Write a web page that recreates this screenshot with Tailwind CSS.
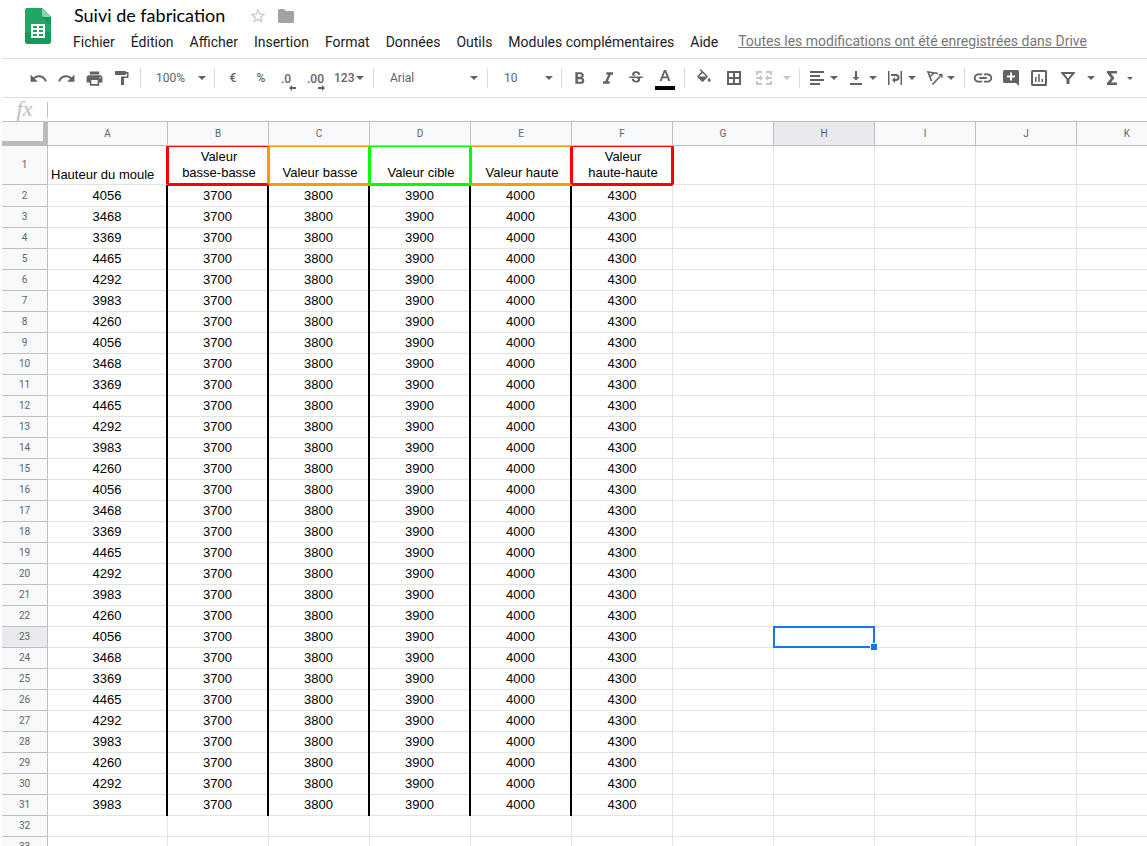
<!DOCTYPE html>
<html lang="fr">
<head>
<meta charset="utf-8">
<title>Suivi de fabrication</title>
<script src="https://cdn.jsdelivr.net/npm/@tailwindcss/browser@4"></script>
</head>
<body class="flex h-screen flex-col overflow-hidden bg-white pl-0.5 font-['Roboto',sans-serif] text-black">

<header class="flex h-[58px] shrink-0 pl-5">
  <a href="#" aria-label="Accueil Sheets" class="mt-2 ml-[3px] block h-9 w-[26px] shrink-0">
    <svg viewBox="0 0 26 36" class="h-9 w-[26px]"><path d="M2.500 0H17l9 9v24.500a2.500 2.500 0 0 1-2.500 2.500h-21A2.500 2.500 0 0 1 0 33.500v-31A2.500 2.500 0 0 1 2.500 0z" fill="#159b58"/><path d="M2.500 0H17l9 9v15H0V2.500A2.500 2.500 0 0 1 2.500 0z" fill="#23a566"/><path d="M17 9h9v9z" fill="#128a4c" opacity=".5"/><path d="M17 0l9 9h-7a2 2 0 0 1-2-2z" fill="#8ed1b1"/><path d="M6 16h14v14H6z" fill="#fff"/><path d="M8 18h4v2H8zM14 18h4v2h-4zM8 22h4v2H8zM14 22h4v2h-4zM8 26h4v2H8zM14 26h4v2h-4z" fill="#1ca05e"/></svg>
  </a>
  <div class="ml-[22px] min-w-0 flex-1">
    <div class="flex h-8 items-center">
      <h1 class="w-44 pb-0.5 pl-px text-lg whitespace-nowrap font-['Lato',sans-serif]">Suivi de fabrication</h1>
      <button aria-label="Suivre" class="flex w-[18px] justify-center"><svg viewBox="0 0 24 24" class="size-[18px] shrink-0" fill="#c4c7cb"><path d="M22 9.240l-7.190-.62L12 2 9.190 8.630 2 9.240l5.460 4.730L5.820 21 12 17.270 18.180 21l-1.630-7.030L22 9.240zM12 15.400l-3.760 2.270 1-4.280-3.320-2.880 4.380-.38L12 6.100l1.710 4.040 4.380.38-3.320 2.880 1 4.280L12 15.400z"/></svg></button>
      <button aria-label="Déplacer" class="ml-2.5 flex w-[18px] justify-center"><svg viewBox="0 0 18 14" class="h-[14px] w-[18px]" fill="#9fa2a7"><path d="M1 1.500Q1 0 2.500 0H7l2 2h6.500Q17 2 17 3.500v9q0 1.500-1.500 1.500h-13Q1 14 1 12.500z"/></svg></button>
    </div>
    <nav class="flex h-5 items-center gap-4 text-sm whitespace-nowrap text-[#202124]">
      <button>Fichier</button><button>Édition</button><button>Afficher</button><button>Insertion</button><button>Format</button><button>Données</button><button>Outils</button><button>Modules complémentaires</button><button>Aide</button>
      <a href="#" class="ml-1 pb-0.5 text-[#777] underline">Toutes les modifications ont été enregistrées dans Drive</a>
    </nav>
  </div>
</header>

<div role="toolbar" aria-label="Mise en forme" class="flex h-10 shrink-0 items-center border-y border-[#dadce0] pl-[22px] text-xs text-[#5f6368]">
  <button aria-label="Annuler" class="flex w-7 shrink-0 justify-center"><svg viewBox="0 0 24 24" class="size-[19px]" fill="currentColor"><path d="M12.500 8c-2.650 0-5.050.99-6.900 2.600L2 7v9h9l-3.620-3.620c1.390-1.160 3.160-1.880 5.120-1.880 3.540 0 6.550 2.310 7.600 5.500l2.370-.78C21.080 11.030 17.150 8 12.500 8z"/></svg></button>
  <button aria-label="Rétablir" class="flex w-7 shrink-0 justify-center"><svg viewBox="0 0 24 24" class="size-[19px]" fill="currentColor"><path d="M18.400 10.600C16.550 8.990 14.150 8 11.500 8c-4.650 0-8.580 3.030-9.960 7.220L3.900 16c1.050-3.190 4.050-5.500 7.600-5.500 1.950 0 3.730.72 5.120 1.880L13 16h9V7l-3.600 3.600z"/></svg></button>
  <button aria-label="Imprimer" class="flex w-7 shrink-0 justify-center"><svg viewBox="0 0 24 24" class="size-[19px]" fill="currentColor"><path d="M19 8H5c-1.660 0-3 1.340-3 3v6h4v4h12v-4h4v-6c0-1.660-1.340-3-3-3zm-3 11H8v-5h8v5zm3-7c-.55 0-1-.45-1-1s.45-1 1-1 1 .45 1 1-.45 1-1 1zm-1-9H6v4h12V3z"/></svg></button>
  <button aria-label="Copier la mise en forme" class="flex w-7 shrink-0 justify-center"><svg viewBox="0 0 18 18" class="size-[18px]" fill="currentColor"><path d="M2.500 2h10q.5 0 .5.500V3h2.500v6H11v7H8V7.500h6v-3h-1v1q0 .5-.5.500h-10Q2 6 2 5.500v-3Q2 2 2.500 2z"/></svg></button>
  <span class="mx-1 h-5 w-px shrink-0 bg-[#dadce0]"></span>
  <label class="flex w-[65px] shrink-0 items-center pl-[11px]"><select aria-label="Zoom" class="w-10 appearance-none"><option>100%</option></select><svg viewBox="0 0 8 4" class="ml-0.5 h-1 w-2" fill="currentColor"><path d="M0 0h8L4 4z"/></svg></label>
  <span class="mx-1 h-5 w-px shrink-0 bg-[#dadce0]"></span>
  <button aria-label="Format monétaire" class="w-7 shrink-0 font-medium">€</button>
  <button aria-label="Format pourcentage" class="w-7 shrink-0 font-medium">%</button>
  <button aria-label="Réduire les décimales" class="flex w-7 shrink-0 flex-col items-start pt-2 pl-1.5 leading-3 font-medium">.0<svg viewBox="0 0 22 6" class="h-1.5 w-[22px]" fill="currentColor"><path d="M8 3l3-3v2h4v2h-4v2z"/></svg></button>
  <button aria-label="Ajouter des décimales" class="flex w-7 shrink-0 flex-col items-start pt-2 pl-1 leading-3 font-medium">.00<svg viewBox="0 0 22 6" class="h-1.5 w-[22px]" fill="currentColor"><path d="M18 3l-3-3v2h-4v2h4v2z"/></svg></button>
  <button aria-label="Autres formats" class="flex w-[38px] shrink-0 items-center pl-[3px] font-medium">123<svg viewBox="0 0 8 4" class="ml-0.5 h-1 w-2" fill="currentColor"><path d="M0 0h8L4 4z"/></svg></button>
  <span class="mx-1 h-5 w-px shrink-0 bg-[#dadce0]"></span>
  <label class="flex w-[105px] shrink-0 items-center pl-3"><select aria-label="Police" class="w-20 appearance-none"><option>Arial</option></select><svg viewBox="0 0 8 4" class="h-1 w-2" fill="currentColor"><path d="M0 0h8L4 4z"/></svg></label>
  <span class="mx-1 h-5 w-px shrink-0 bg-[#dadce0]"></span>
  <label class="flex w-[65px] shrink-0 items-center pl-3"><select aria-label="Taille de police" class="w-[41px] appearance-none"><option>10</option></select><svg viewBox="0 0 8 4" class="h-1 w-2" fill="currentColor"><path d="M0 0h8L4 4z"/></svg></label>
  <span class="mx-1 h-5 w-px shrink-0 bg-[#dadce0]"></span>
  <button aria-label="Gras" class="flex w-7 shrink-0 justify-center"><svg viewBox="0 0 24 24" class="size-5" fill="currentColor"><path d="M15.600 10.790c.97-.67 1.650-1.770 1.650-2.790 0-2.260-1.750-4-4-4H7v14h7.040c2.090 0 3.710-1.700 3.710-3.790 0-1.520-.86-2.820-2.150-3.420zM10 6.500h3c.83 0 1.500.67 1.500 1.500s-.67 1.500-1.500 1.500h-3v-3zm3.500 9H10v-3h3.500c.83 0 1.500.67 1.500 1.500s-.67 1.500-1.500 1.500z" transform="translate(-.6 1)"/></svg></button>
  <button aria-label="Italique" class="flex w-7 shrink-0 justify-center"><svg viewBox="0 0 24 24" class="size-5" fill="currentColor"><path d="M10 5v3h2.210l-3.420 8H6v3h8v-3h-2.210l3.420-8H18V5z"/></svg></button>
  <button aria-label="Barré" class="flex w-7 shrink-0 justify-center"><svg viewBox="0 0 24 24" class="size-[18px]" fill="currentColor"><path d="M7.240 8.750c-.26-.48-.39-1.030-.39-1.670 0-.61.130-1.160.4-1.670.26-.5.63-.93 1.110-1.290.48-.35 1.050-.63 1.700-.83.66-.19 1.390-.29 2.180-.29.81 0 1.540.110 2.210.34.66.220 1.230.54 1.690.94.47.4.83.88 1.080 1.430s.38 1.150.38 1.810h-3.010c0-.31-.05-.59-.15-.85-.09-.27-.24-.49-.44-.68-.2-.19-.45-.33-.75-.44-.3-.1-.66-.16-1.060-.16-.39 0-.74.040-1.030.130s-.53.210-.72.360c-.19.160-.34.340-.44.550-.1.210-.15.430-.15.660 0 .48.250.88.740 1.210.38.250.77.480 1.410.7H7.390c-.05-.08-.11-.17-.15-.25zM21 12v-2H3v2h9.620c.18.070.4.140.55.200.37.170.66.340.87.510s.35.360.43.570c.07.200.110.430.110.69 0 .23-.05.450-.14.660-.09.200-.23.380-.42.530-.19.150-.42.260-.71.350-.29.080-.63.130-1.010.130-.43 0-.83-.04-1.180-.13s-.66-.23-.91-.42c-.25-.19-.45-.44-.59-.75s-.25-.76-.25-1.210H6.400c0 .55.080 1.130.240 1.580s.37.850.65 1.210c.28.350.6.660.98.920.37.260.78.480 1.220.65.440.17.900.300 1.380.39.480.080.960.130 1.440.130.800 0 1.530-.09 2.180-.28s1.210-.45 1.670-.79c.46-.34.820-.77 1.070-1.270s.38-1.070.38-1.710c0-.6-.1-1.140-.31-1.610-.05-.11-.11-.23-.17-.33H21z"/></svg></button>
  <button aria-label="Couleur du texte" class="flex w-[30px] shrink-0 justify-center"><svg viewBox="0 0 22 24" class="h-6 w-[22px]"><path d="M9.900 4h2.200l4.300 11h-2.100l-1-2.700H8.700l-1 2.700H5.600zM11 6.200L9.300 10.600h3.400z" fill="#5f6368"/><path d="M1 20h20v4H1z" fill="#000"/></svg></button>
  <span class="mx-1 h-5 w-px shrink-0 bg-[#dadce0]"></span>
  <button aria-label="Couleur de remplissage" class="flex w-[30px] shrink-0 justify-center"><svg viewBox="0 0 24 24" class="size-[18px]" fill="currentColor"><path d="M16.560 8.940L7.620 0 6.210 1.410l2.380 2.380-5.150 5.150c-.59.59-.59 1.540 0 2.120l5.500 5.500c.29.290.68.440 1.060.440s.77-.15 1.060-.44l5.500-5.500c.59-.58.59-1.530 0-2.120zM5.210 10L10 5.210 14.790 10H5.210zM19 11.500s-2 2.170-2 3.500c0 1.100.9 2 2 2s2-.9 2-2c0-1.330-2-3.500-2-3.500z"/></svg></button>
  <button aria-label="Bordures" class="flex w-[30px] shrink-0 justify-center"><svg viewBox="0 0 14 14" class="size-[14px]" fill="none" stroke="currentColor" stroke-width="2"><path d="M1 1h12v12H1zM7 1v12M1 7h12"/></svg></button>
  <button aria-label="Fusionner" class="flex w-[30px] shrink-0 justify-center text-[#c4c6c8]"><svg viewBox="0 0 16 14" class="h-[14px] w-4" fill="currentColor"><path d="M0 0h6v2H2v2H0zM10 0h6v4h-2V2h-4zM0 10h2v2h4v2H0zM14 10h2v4h-6v-2h4zM0 6h4V4l3 3-3 3V8H0zM16 6h-4V4L9 7l3 3V8h4z"/></svg></button>
  <button aria-label="Types de fusion" class="flex w-4 shrink-0 justify-center text-[#c4c6c8]"><svg viewBox="0 0 8 4" class="h-1 w-2" fill="currentColor"><path d="M0 0h8L4 4z"/></svg></button>
  <span class="mx-1 h-5 w-px shrink-0 bg-[#dadce0]"></span>
  <button aria-label="Alignement horizontal" class="flex w-[39px] shrink-0 items-center gap-1.5 pl-1.5"><svg viewBox="0 0 14 14" class="h-[14px] w-[14px]" fill="currentColor"><path d="M0 0h14v2H0zM0 4h10v2H0zM0 8h14v2H0zM0 12h10v2H0z"/></svg><svg viewBox="0 0 8 4" class="h-1 w-2" fill="currentColor"><path d="M0 0h8L4 4z"/></svg></button>
  <button aria-label="Alignement vertical" class="flex w-[39px] shrink-0 items-center gap-1.5 pl-1.5"><svg viewBox="0 0 14 14" class="h-[14px] w-[14px]" fill="currentColor"><path d="M1 12h12v2H1zM6 0h2v6h2.500L7 9.500 3.500 6H6z"/></svg><svg viewBox="0 0 8 4" class="h-1 w-2" fill="currentColor"><path d="M0 0h8L4 4z"/></svg></button>
  <button aria-label="Retour à la ligne" class="flex w-[39px] shrink-0 items-center gap-1.5 pl-1.5"><svg viewBox="0 0 14 14" class="h-[14px] w-[14px]" fill="currentColor"><path d="M0 0h1.500v14H0zM12.500 0H14v14h-1.500zM3 3h5a3.500 3.500 0 0 1 0 7H7v2L4 9l3-3v2h1a1.500 1.500 0 0 0 0-3H3z"/></svg><svg viewBox="0 0 8 4" class="h-1 w-2" fill="currentColor"><path d="M0 0h8L4 4z"/></svg></button>
  <button aria-label="Rotation du texte" class="flex w-[39px] shrink-0 items-center gap-1 pl-1.5"><svg viewBox="0 0 16 14" class="h-[14px] w-4" fill="none" stroke="currentColor" stroke-width="1.600"><path d="M11 2.500L1 1l3.500 9M4.500 10l-.2-.6M7 2l-4.500 4M5.500 13.500L13 5.500"/><path d="M15.500 3v4.500L11 3z" fill="currentColor" stroke="none"/></svg><svg viewBox="0 0 8 4" class="h-1 w-2" fill="currentColor"><path d="M0 0h8L4 4z"/></svg></button>
  <span class="mx-1 h-5 w-px shrink-0 bg-[#dadce0]"></span>
  <button aria-label="Insérer un lien" class="flex w-7 shrink-0 justify-center"><svg viewBox="0 0 24 24" class="size-[22px]" fill="currentColor"><path d="M3.900 12c0-1.710 1.390-3.100 3.100-3.100h4V7H7c-2.760 0-5 2.240-5 5s2.240 5 5 5h4v-1.900H7c-1.710 0-3.100-1.390-3.100-3.100zM8 13h8v-2H8v2zm9-6h-4v1.900h4c1.710 0 3.100 1.390 3.100 3.100s-1.390 3.100-3.100 3.100h-4V17h4c2.760 0 5-2.240 5-5s-2.240-5-5-5z"/></svg></button>
  <button aria-label="Insérer un commentaire" class="flex w-7 shrink-0 justify-center"><svg viewBox="0 0 16 16" class="size-4" fill="currentColor"><path fill-rule="evenodd" d="M1.500 0h13Q16 0 16 1.500V16l-3-3H1.500Q0 13 0 11.500v-10Q0 0 1.500 0zM7 2.500v3H4v2h3v3h2v-3h3v-2H9v-3z"/></svg></button>
  <button aria-label="Insérer un graphique" class="flex w-7 shrink-0 justify-center"><svg viewBox="0 0 16 16" class="size-4" fill="currentColor"><path fill-rule="evenodd" d="M1.500 0h13Q16 0 16 1.500v13q0 1.500-1.500 1.500h-13Q0 16 0 14.500v-13Q0 0 1.500 0zM2 2v12h12V2zM4 7h1.500v5H4zM7.200 4h1.600v8H7.200zM10.500 9H12v3h-1.500z"/></svg></button>
  <button aria-label="Créer un filtre" class="flex w-[30px] shrink-0 justify-center"><svg viewBox="0 0 14 12" class="h-3 w-[14px]" fill="currentColor"><path fill-rule="evenodd" d="M0 0h14v1L8.500 7.500V12h-3V7.500L0 1zM3.500 2L7 6.500 10.500 2z"/></svg></button>
  <button aria-label="Vues filtrées" class="flex w-[15px] shrink-0 justify-center"><svg viewBox="0 0 8 4" class="h-1 w-2" fill="currentColor"><path d="M0 0h8L4 4z"/></svg></button>
  <button aria-label="Fonctions" class="flex w-7 shrink-0 justify-center"><svg viewBox="0 0 12 14" class="h-[14px] w-3" fill="currentColor"><path d="M1 0h10v2.500H5L8.500 7 5 11.500h6V14H1v-2l4-5-4-5z"/></svg></button>
  <button aria-label="Liste des fonctions" class="flex w-2 shrink-0 justify-center"><svg viewBox="0 0 6 3" class="h-[3px] w-1.5" fill="currentColor"><path d="M0 0h6L3 3z"/></svg></button>
</div>

<div class="flex h-[23px] shrink-0 items-center">
  <label for="formula" class="w-[45px] pb-0.5 text-center font-['Liberation_Serif',serif] text-[22px] leading-5 text-[#bdbdbd] italic">fx</label>
  <input id="formula" type="text" class="h-4 min-w-0 flex-1 border-l border-[#c0c0c0] pl-2 text-sm outline-none">
</div>

<main class="min-h-0 flex-1 overflow-hidden border-t border-[#c0c0c0]">
  <table class="w-[1175px] table-fixed border-separate border-spacing-0 text-center font-['Liberation_Sans',sans-serif] text-[13px]">
    <colgroup><col class="w-[46px]"><col class="w-[120px]"><col span="10" class="w-[101px]"></colgroup>
    <thead class="font-['Roboto',sans-serif] text-[10px] text-[#5f6368]">
      <tr id="letters" class="h-6"><td class="border-r-[5px] border-b-[5px] border-[#bbb] bg-[#f8f9fa] p-0"></td></tr>
    </thead>
    <tbody id="rows">
      <tr class="h-[39px] align-bottom leading-4">
        <th scope="row" class="border-r border-b border-[#c0c0c0] bg-[#f8f9fa] p-0 align-middle font-['Roboto',sans-serif] text-[10px] font-normal text-[#5f6368]">1</th>
        <td class="border-r-2 border-b border-r-[#f00] border-b-[#e2e3e3] pt-0 pr-0 pb-px pl-[3px] text-left whitespace-nowrap">Hauteur du moule</td>
        <td class="border-t border-r-2 border-b-2 border-l border-[#f00] border-r-[#f90] pt-0 pr-0 pb-0.5 pl-0.5">Valeur<br>basse-basse</td>
        <td class="border-t border-r-2 border-b-2 border-l border-[#f90] border-r-[#0f0] pt-0 pr-0 pb-0.5 pl-0.5">Valeur basse</td>
        <td class="border-t border-r-2 border-b-2 border-l border-[#0f0] pt-0 pr-0 pb-0.5 pl-0.5">Valeur cible</td>
        <td class="border-t border-r-2 border-b-2 border-l border-[#f90] border-r-[#f00] border-l-[#0f0] pt-0 pr-0 pb-0.5 pl-0.5">Valeur haute</td>
        <td class="border-t border-r-2 border-b-2 border-l border-[#f00] pt-0 pr-0 pb-0.5 pl-0.5">Valeur<br>haute-haute</td>
        <td class="border-r border-b border-l border-[#e2e3e3] border-l-[#f00] p-0"></td>
        <td class="border-r border-b border-[#e2e3e3] p-0"></td>
        <td class="border-r border-b border-[#e2e3e3] p-0"></td>
        <td class="border-r border-b border-[#e2e3e3] p-0"></td>
        <td class="border-r border-b border-[#e2e3e3] p-0"></td>
      </tr>
    </tbody>
  </table>
</main>

<script>
const letters = document.getElementById('letters');
for (const c of 'ABCDEFGHIJK') {
  const bg = c === 'H' ? 'bg-[#e8eaed]' : 'bg-[#f8f9fa]';
  letters.insertAdjacentHTML('beforeend', `<th scope="col" class="border-r border-b border-[#c0c0c0] p-0 font-normal ${bg}">${c}</th>`);
}

const cycle = [4056, 3468, 3369, 4465, 4292, 3983, 4260];
const measures = [...cycle, ...cycle, ...cycle, ...cycle, 4292, 3983];
const limits = [3700, 3800, 3900, 4000, 4300];
const topEdges = ['', 'border-t border-t-[#f00]', 'border-t border-t-[#f90]', 'border-t border-t-[#0f0]', 'border-t border-t-[#f90]', 'border-t border-t-[#f00]'];
const thickEdge = "relative p-0 pr-0.5 after:absolute after:top-0 after:right-0 after:-bottom-px after:w-0.5 after:bg-black after:content-['']";
const selection = '<div class="absolute -inset-px border-2 border-[#1a73e8]"></div><div class="absolute -right-1 -bottom-1 size-2 border border-white bg-[#1a73e8]"></div>';
let html = '';
for (let n = 2; n <= 33; n++) {
  const filled = n - 2 < measures.length;
  const values = filled ? [measures[n - 2], ...limits] : [];
  const height = n === 2 ? 'h-[22px]' : 'h-[21px]';
  const bg = n === 23 ? 'bg-[#e8eaed]' : 'bg-[#f8f9fa]';
  html += `<tr class="${height} leading-4"><th scope="row" class="border-r border-b border-[#c0c0c0] p-0 font-['Roboto',sans-serif] text-[10px] font-normal text-[#5f6368] ${bg}">${n}</th>`;
  for (let c = 0; c < 11; c++) {
    const side = filled && c < 5 ? thickEdge : 'border-r border-r-[#e2e3e3] p-0';
    const top = n === 2 && c < 6 ? topEdges[c] : '';
    const active = n === 23 && c === 7;
    html += `<td class="border-b border-b-[#e2e3e3] ${side} ${top} ${active ? 'relative' : ''}">${active ? selection : values[c] ?? ''}</td>`;
  }
  html += '</tr>';
}
document.getElementById('rows').insertAdjacentHTML('beforeend', html);
</script>
</body>
</html>
